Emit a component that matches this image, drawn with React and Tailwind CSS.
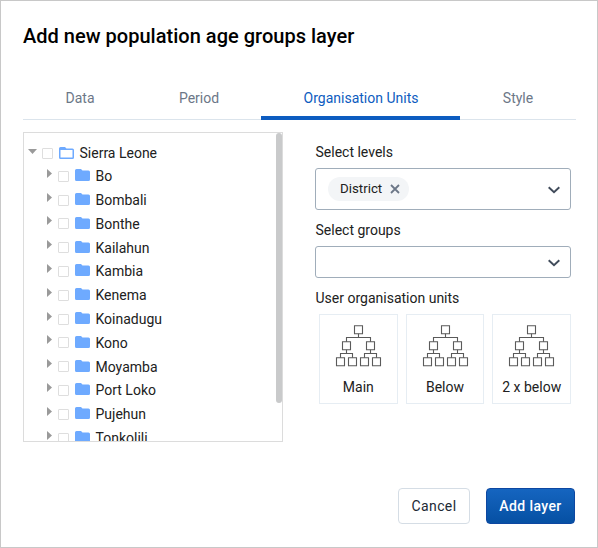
import React from "react";

const districts = ["Bo", "Bombali", "Bonthe", "Kailahun", "Kambia", "Kenema", "Koinadugu", "Kono", "Moyamba", "Port Loko", "Pujehun", "Tonkolili"];

const Checkbox = () => <span className="size-[11px] shrink-0 rounded-[1px] border border-[#dedede] bg-white" />;

function Folder({ open }) {
  return (
    <svg className="h-3 w-[15px] shrink-0" viewBox="0 0 15 12" fill="#6eaaff">
      {open ? (
        <path fillRule="evenodd" d="M1.5 0H6L7.5 1.5H13.5Q15 1.5 15 3V10.5Q15 12 13.5 12H1.5Q0 12 0 10.5V1.5Q0 0 1.5 0ZM1.5 3V10.5H13.5V3Z" />
      ) : (
        <path d="M1.5 0H6L7.5 1.5H13.5Q15 1.5 15 3V10.5Q15 12 13.5 12H1.5Q0 12 0 10.5V1.5Q0 0 1.5 0Z" />
      )}
    </svg>
  );
}

function Chevron() {
  return (
    <svg className="mt-px h-2 w-3" viewBox="0 0 12 8" fill="none" stroke="#404b5a" strokeWidth="1.9">
      <path d="M0.7 1.2L6 6.3L11.3 1.2" />
    </svg>
  );
}

function Tree() {
  return (
    <div className="relative h-[310px] w-[260px] overflow-hidden border border-[#dcdcdc] text-[14px] text-[#212121]">
      <div className="flex h-6 items-center pt-4 pl-1">
        <svg className="-mt-1 h-[5px] w-[9px]" viewBox="0 0 9 5" fill="#9a9a9a"><path d="M0 0H9L4.5 5Z" /></svg>
        <span className="ml-[5px] flex"><Checkbox /></span>
        <span className="ml-[6px] flex"><Folder open /></span>
        <span className="ml-[5.5px] leading-4">Sierra Leone</span>
      </div>
      <div className="mt-[7.4px]">
        {districts.map((name) => (
          <div key={name} className="flex h-[23.8px] items-center pl-[23px]">
            <svg className="-mt-[6px] h-[9px] w-[5px]" viewBox="0 0 5 9" fill="#9a9a9a"><path d="M0 0L5 4.5L0 9Z" /></svg>
            <span className="ml-[6px] flex"><Checkbox /></span>
            <span className="-mt-[2px] ml-[6px] flex"><Folder /></span>
            <span className="ml-[5.5px] leading-4">{name}</span>
          </div>
        ))}
      </div>
      <div className="absolute top-0 right-0 h-[270px] w-[6px] rounded-full bg-[#c9cacb]" />
    </div>
  );
}

function Hierarchy() {
  return (
    <svg className="h-[43px] w-[47px]" viewBox="0 0 47 43" fill="none" stroke="#5a5a5a" strokeWidth="1.1">
      <path d="M19.5 0.8h8v8h-8zM7.5 16.8h8v8h-8zM31.5 16.8h8v8h-8zM1.5 32.8h8v8h-8zM13.5 32.8h8v8h-8zM25.5 32.8h8v8h-8zM37.5 32.8h8v8h-8z" />
      <path d="M23.5 8.8v3.7M11.5 16.8V12.5H35.5v4.3M11.5 24.8v4M5.5 32.8v-4.3H17.5v4.3M35.5 24.8v4M29.5 32.8v-4.3H41.5v4.3" />
    </svg>
  );
}

const Card = ({ label }) => (
  <button className="flex h-[90px] flex-1 flex-col items-center border border-[#e6edf3] pt-[10px] text-[14px] text-[#212121]">
    <Hierarchy />
    <span className="mt-[11px] leading-4">{label}</span>
  </button>
);

const Tab = ({ children, className }) => (
  <button className={"h-[43px] text-center text-[#6c7787] " + className}>{children}</button>
);

export default function App() {
  return (
    <div className="h-[548px] w-[598px] border border-[#c8c8c8] bg-white pl-[22px] font-[Roboto,sans-serif]">
      <h1 className="pt-[23px] text-[20px] leading-6 font-medium tracking-[0.02px] text-black">Add new population age groups layer</h1>
      <div className="mt-[29px] flex w-[553px] text-[14px] shadow-[inset_0_-1px_0_#dbe4ec]">
        <Tab className="w-[114px]">Data</Tab>
        <Tab className="w-[124px]">Period</Tab>
        <button className="h-[43px] w-[199px] border-b-4 border-[#0d5cc0] pt-1 pl-px text-[#0d5cc0]">Organisation Units</button>
        <Tab className="w-[116px]">Style</Tab>
      </div>
      <div className="mt-3 flex">
        <Tree />
        <div className="ml-8 w-[256px] text-[14px] leading-4 text-[#212121]">
          <div className="mt-[12px] pl-[0.5px]">Select levels</div>
          <div className="mt-[8px] flex h-[42px] items-center justify-between rounded-[3px] border border-[#a0adba] pr-[10px] pl-3">
            <span className="flex h-6 w-[81px] items-center rounded-full bg-[#f3f5f7] pl-3 text-[13.3px]">
              District
              <svg className="ml-[8px] size-[10px]" viewBox="0 0 10 10" stroke="#6c7787" strokeWidth="1.8"><path d="M1 1L9 9M9 1L1 9" /></svg>
            </span>
            <Chevron />
          </div>
          <div className="mt-[12px] pl-[0.5px]">Select groups</div>
          <div className="mt-2 flex h-8 items-center justify-end rounded-[3px] border border-[#a0adba] pr-[10px]"><Chevron /></div>
          <div className="mt-[12px] pl-[0.5px]">User organisation units</div>
          <div className="mt-2 ml-1 flex gap-2">
            <Card label="Main" />
            <Card label="Below" />
            <Card label="2 x below" />
          </div>
        </div>
      </div>
      <div className="mt-[46px] flex w-[552px] justify-end gap-4 text-[14px]">
        <button className="h-9 w-[72px] rounded-[4px] border border-[#d5dde5] tracking-[0.4px] text-[#212934]">Cancel</button>
        <button className="h-9 w-[89px] rounded-[4px] border border-[#0d47a1] bg-linear-to-b from-[#1565c0] to-[#0650a3] font-medium tracking-[0.4px] text-white">Add layer</button>
      </div>
    </div>
  );
}
